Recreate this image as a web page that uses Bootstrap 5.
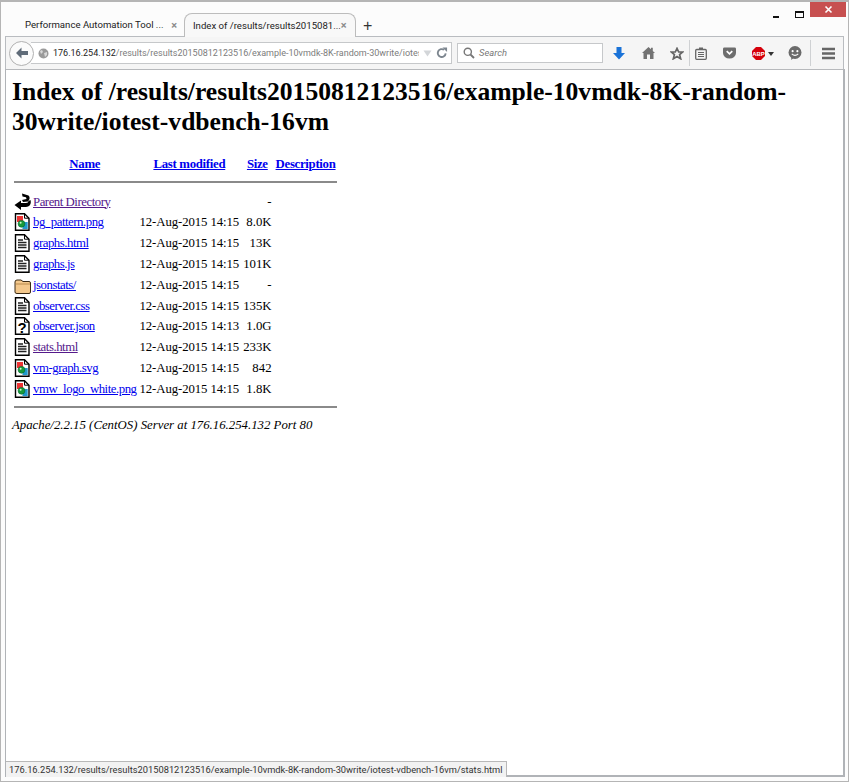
<!DOCTYPE html>
<html lang="en">
<head>
<meta charset="utf-8">
<title>Index of results</title>
<link href="https://cdn.jsdelivr.net/npm/bootstrap@5.3.0/dist/css/bootstrap.min.css" rel="stylesheet">
<style>
html,body{height:100%;margin:0}
body{background:#fff;font-family:"Liberation Sans",sans-serif;overflow:hidden}
.win{width:849px;height:782px;border:1px solid #b5b5b5;border-top:2px solid #b5b5b5;background:#fcfcfc;position:relative}
.tabbar{height:34px;padding-left:9px;background:#fcfcfc}
.wctl{position:absolute;top:0;right:2px;height:17px}
.wbtn{width:22px;height:15px}
.wclose{width:36px;height:15px;background:#c75050}
.tab{font:9.6px/1 Roboto,sans-serif;color:#222;white-space:nowrap;height:24px;margin-top:11px}
.tab1{width:170px;padding-left:15px;padding-right:3px}
.tab2{width:172px;padding-left:8px;padding-right:11px;margin-left:4px;position:relative;height:24px;border:1px solid #bcbcbc;border-bottom:0;border-radius:8px 8px 0 0;background:#f8f8f8;z-index:1}
.tabclose{color:#8b8b8b;font-size:11px;font-weight:700}
.plus{font:400 16px/1 "Liberation Sans",sans-serif;color:#333;margin-left:7px}
.tool{height:33px;margin:0 4px;border:1px solid #b9bcc0;border-bottom:0;background:#f5f5f5;padding:0 3px}
.back{width:25px;height:25px;border-radius:50%;background:#fbfbfb;border:1px solid #b1b1b1;flex:none}
.urlbar{width:421px;height:22px;margin-left:-3px;background:#fff;border:1px solid #c6c8ca;border-left:0;font:9px/20px Roboto,sans-serif;color:#7c7c7c;white-space:nowrap;overflow:hidden;padding-left:7px;flex:none}
.urlbar b{font-weight:400;color:#222}
.urltxt{width:366px;overflow:hidden;margin-left:4px;flex:none}
.search{width:146px;height:20px;margin-left:5px;background:#fff;border:1px solid #c6c8ca;font:italic 9.4px/18px Roboto,sans-serif;color:#777;padding-left:5px;flex:none}
.ics{margin-left:1px}
.slot{display:flex;justify-content:center;flex:none}
.sl30{width:30px}.sl28{width:28px}.sl27{width:27px;padding-left:3px}.sl22{width:22px}.sl34{width:34px}
.vsep{width:1px;height:26px;background:#cfd1d3;flex:none}
.page{position:absolute;left:4px;top:67px;width:840px;height:708px;background:#fff;border:1px solid #b0b3b7;border-top:1px solid #b7b9bc;border-width:1px 2px 2px 1px;padding:0 6px;font:12.8px/1.15 "Liberation Serif",serif;color:#000}
.page a{color:#00e}
.page a.seen{color:#551a8b}
.page h1{font:700 25.6px/30px "Liberation Serif",serif;margin:7px 0 16px;color:#000}
.lst{border-collapse:separate;border-spacing:2px}
.lst th,.lst td{padding:1px;white-space:nowrap;vertical-align:top;line-height:16.8px}
.lst th{text-align:center;font-weight:700;letter-spacing:-.3px}
.lst td.ic{width:17px;padding:0}
.lst td.nm{padding:1px 0 1px 0;letter-spacing:-.47px}
.lst td.dt{letter-spacing:-.1px}
.lst td.r{text-align:right}
.lst svg{display:block}
.rule{height:2px;background:#8a8a8a;border:0;margin:0;opacity:1}
.rc1{padding:5.7px 0 0!important;height:14.8px}
.rc2{padding:5.6px 0 0!important;height:8px}
.foot{font:italic 12.8px/16px "Liberation Serif",serif;margin-top:6.6px}
.status{position:absolute;left:5px;top:759px;height:16px;padding:0 4px 0 3px;background:#f2f2f2;border:1px solid #b8b8b8;border-left:0;border-bottom:0;font:9.3px/15px Roboto,sans-serif;color:#333;white-space:nowrap;z-index:2}
</style>
</head>
<body>
<svg width="0" height="0" class="position-absolute">
<defs>
<g id="doc"><path d="M1.5 .7H10.5L15 5.2V17.3H1.5Z" fill="#fff" stroke="#000" stroke-width="1.4"/><path d="M10.5 .7V5.2H15" fill="none" stroke="#000"/></g>
<g id="txt"><use href="#doc"/><path d="M4 6H9M4 8.5H12.5M4 11H12.5M4 13.5H12.5" stroke="#222" stroke-width="1.3"/></g>
<g id="img"><use href="#doc"/><rect x="3" y="3" width="6" height="6" fill="#e33"/><rect x="8.5" y="9" width="5.2" height="7" fill="#29c"/><circle cx="7.5" cy="10.8" r="3.4" fill="#1a9a3a" stroke="#063" stroke-width=".6"/><circle cx="6.6" cy="9.8" r="1" fill="#cfc"/></g>
<g id="unk"><use href="#doc"/><text x="8.2" y="15.5" text-anchor="middle" font-family="Liberation Sans" font-weight="700" font-size="15" fill="#000">?</text></g>
<g id="fold"><path d="M1 6Q1 4 3 4H7L9 5.5H15Q16.5 5.5 16.5 7V16Q16.5 17.5 15 17.5H3Q1 17.5 1 16Z" fill="#f4c88c" stroke="#3a2a14" stroke-width="1"/><path d="M2 8H16" stroke="#b98a4c"/></g>
<g id="par"><path d="M8 .5L14.5 2.5Q17 5 14 8.5L9 9 8 7 12.5 6 12 4.2 8.5 3.5Z" fill="#000"/><path d="M16.5 7Q18 13 12 14L7 14 7 17 .5 12 7 7.5 7 10 12 10Q14.5 10 14.5 8Z" fill="#000"/></g>
</defs>
</svg>
<div class="win">
  <div class="tabbar d-flex align-items-start">
    <div class="tab tab1 d-flex align-items-center justify-content-between"><span>Performance Automation Tool ...</span><span class="tabclose">×</span></div>
    <div class="tab tab2 d-flex align-items-center justify-content-between"><span>Index of /results/results2015081...</span><span class="tabclose">×</span></div>
    <span class="plus mt-3">+</span>
    <div class="wctl d-flex align-items-start">
      <div class="wbtn"><svg width="22" height="15"><rect x="7" y="9" width="6" height="2" fill="#111"/></svg></div>
      <div class="wbtn"><svg width="22" height="15"><rect x="7.5" y="4.5" width="8" height="6" fill="none" stroke="#111" stroke-width="1"/><rect x="7" y="4" width="9" height="2" fill="#111"/></svg></div>
      <div class="wclose d-flex justify-content-center align-items-center"><svg width="9" height="9"><path d="M1.5 1.5L7.5 7.5M7.5 1.5L1.5 7.5" stroke="#fff" stroke-width="1.6"/></svg></div>
    </div>
  </div>
  <div class="tool d-flex align-items-center">
    <div class="back d-flex align-items-center justify-content-center position-relative z-1"><svg width="14" height="12" viewBox="0 0 14 12"><path d="M6.5 0.5L1 6l5.5 5.5V8H13V4H6.5Z" fill="#5f6b78"/></svg></div>
    <div class="urlbar d-flex align-items-center">
      <svg width="11" height="11" viewBox="0 0 11 11" class="flex-none"><circle cx="5.5" cy="5.5" r="5" fill="#9a9a9a"/><path d="M2 3l2-1 1 2-2 2zM6 5l3-1 0 3-2 2z" fill="#d8d8d8"/></svg>
      <div class="urltxt"><b>176.16.254.132</b>/results/results20150812123516/example-10vmdk-8K-random-30write/iotest-vdbench-16vm</div>
      <svg width="9" height="7" viewBox="0 0 9 7" class="ms-1"><path d="M.5.5h8L4.5 6.5Z" fill="#d3d6d9"/></svg>
      <svg width="12" height="12" viewBox="0 0 13 12" class="ms-1"><path d="M10.5 6.5A4.3 4.3 0 1 1 8.8 2.6" fill="none" stroke="#7d868f" stroke-width="2"/><path d="M7 0H12V5Z" fill="#7d868f"/></svg>
    </div>
    <div class="search d-flex align-items-center">
      <svg width="12" height="12" viewBox="0 0 12 12" class="me-1"><circle cx="4.8" cy="4.8" r="3.6" fill="none" stroke="#777" stroke-width="1.4"/><path d="M7.5 7.5L11 11" stroke="#777" stroke-width="1.8"/></svg><span>Search</span>
    </div>
    <div class="ics d-flex align-items-center">
      <div class="slot sl30"><svg width="12" height="13" viewBox="0 0 12 13"><path d="M3.5 0H8.5V6H12L6 12.5 0 6H3.5Z" fill="#1a73d8"/></svg></div>
      <div class="slot sl28"><svg width="13" height="12" viewBox="0 0 13 12"><path d="M6.5 0L9 2.3V.8H10.8V4L13 6 11.5 6V12H8V7.5H5V12H1.5V6H0Z" fill="#737373"/></svg></div>
      <div class="slot sl27"><svg width="14" height="13" viewBox="0 0 14 13"><path d="M7 1.4L8.7 5H12.8L9.6 7.6 10.7 11.8 7 9.5 3.3 11.8 4.4 7.6 1.2 5H5.3Z" fill="none" stroke="#666" stroke-width="1.7"/></svg></div>
      <div class="vsep"></div>
      <div class="slot sl22"><svg width="12" height="13" viewBox="0 0 12 13"><rect x=".7" y="2.5" width="10.6" height="9.8" rx="1" fill="none" stroke="#666" stroke-width="1.3"/><rect x="4" y=".5" width="4" height="2.5" fill="#666"/><path d="M3 5.5H9M3 7.5H9M3 9.5H9" stroke="#666"/></svg></div>
      <div class="slot sl34"><svg width="13" height="12" viewBox="0 0 14 12"><path d="M0 1.5Q0 0 1.5 0H12.5Q14 0 14 1.5V6A7 6 0 0 1 0 6Z" fill="#6d6d6d"/><path d="M4 4L7 7 10 4" fill="none" stroke="#fff" stroke-width="1.8"/></svg></div>
      <div class="slot sl34"><svg width="22" height="13" viewBox="0 0 22 13"><path d="M4 0H9L13 4V9L9 13H4L0 9V4Z" fill="#d5000b"/><text x="6.5" y="8.8" text-anchor="middle" font-family="Liberation Sans" font-size="6" font-weight="700" fill="#fff">ABP</text><path d="M16 5H22L19 9Z" fill="#333"/></svg></div>
      <div class="slot sl30"><svg width="14" height="14" viewBox="0 0 13 13"><circle cx="6.5" cy="6" r="6" fill="#6b6b6b"/><path d="M3 9v4l3-2.5z" fill="#6b6b6b"/><circle cx="4.3" cy="4.8" r="1" fill="#fff"/><circle cx="8.7" cy="4.8" r="1" fill="#fff"/><path d="M3.5 7.3Q6.5 10 9.5 7.3" fill="none" stroke="#fff" stroke-width="1"/></svg></div>
      <div class="vsep"></div>
      <div class="slot sl34"><svg width="13" height="13" viewBox="0 0 13 13"><path d="M0 2H13M0 6.5H13M0 11H13" stroke="#666" stroke-width="2.6"/></svg></div>
    </div>
  </div>
  <div class="page">
    <h1>Index of /results/results20150812123516/example-10vmdk-8K-random-<br>30write/iotest-vdbench-16vm</h1>
    <table class="lst">
      <tr><th></th><th><a href="#">Name</a></th><th><a href="#">Last modified</a></th><th><a href="#">Size</a></th><th><a href="#">Description</a></th></tr>
      <tr><td colspan="5" class="rc1"><hr class="rule"></td></tr>
      <tr><td class="ic"><svg width="17" height="18"><use href="#par"/></svg></td><td class="nm"><a class="seen" href="#">Parent Directory</a></td><td class="dt"></td><td class="r">-</td><td></td></tr>
      <tr><td class="ic"><svg width="17" height="18"><use href="#img"/></svg></td><td class="nm"><a href="#">bg_pattern.png</a></td><td class="dt">12-Aug-2015 14:15</td><td class="r">8.0K</td><td></td></tr>
      <tr><td class="ic"><svg width="17" height="18"><use href="#txt"/></svg></td><td class="nm"><a href="#">graphs.html</a></td><td class="dt">12-Aug-2015 14:15</td><td class="r">13K</td><td></td></tr>
      <tr><td class="ic"><svg width="17" height="18"><use href="#txt"/></svg></td><td class="nm"><a href="#">graphs.js</a></td><td class="dt">12-Aug-2015 14:15</td><td class="r">101K</td><td></td></tr>
      <tr><td class="ic"><svg width="17" height="18"><use href="#fold"/></svg></td><td class="nm"><a href="#">jsonstats/</a></td><td class="dt">12-Aug-2015 14:15</td><td class="r">-</td><td></td></tr>
      <tr><td class="ic"><svg width="17" height="18"><use href="#txt"/></svg></td><td class="nm"><a href="#">observer.css</a></td><td class="dt">12-Aug-2015 14:15</td><td class="r">135K</td><td></td></tr>
      <tr><td class="ic"><svg width="17" height="18"><use href="#unk"/></svg></td><td class="nm"><a href="#">observer.json</a></td><td class="dt">12-Aug-2015 14:13</td><td class="r">1.0G</td><td></td></tr>
      <tr><td class="ic"><svg width="17" height="18"><use href="#txt"/></svg></td><td class="nm"><a class="seen" href="#">stats.html</a></td><td class="dt">12-Aug-2015 14:15</td><td class="r">233K</td><td></td></tr>
      <tr><td class="ic"><svg width="17" height="18"><use href="#img"/></svg></td><td class="nm"><a href="#">vm-graph.svg</a></td><td class="dt">12-Aug-2015 14:15</td><td class="r">842</td><td></td></tr>
      <tr><td class="ic"><svg width="17" height="18"><use href="#img"/></svg></td><td class="nm"><a href="#">vmw_logo_white.png</a></td><td class="dt">12-Aug-2015 14:15</td><td class="r">1.8K</td><td></td></tr>
      <tr><td colspan="5" class="rc2"><hr class="rule"></td></tr>
    </table>
    <address class="foot mb-0">Apache/2.2.15 (CentOS) Server at 176.16.254.132 Port 80</address>
  </div>
  <div class="status">176.16.254.132/results/results20150812123516/example-10vmdk-8K-random-30write/iotest-vdbench-16vm/stats.html</div>
</div>
<script src="https://cdn.jsdelivr.net/npm/bootstrap@5.3.0/dist/js/bootstrap.bundle.min.js"></script>
</body>
</html>
